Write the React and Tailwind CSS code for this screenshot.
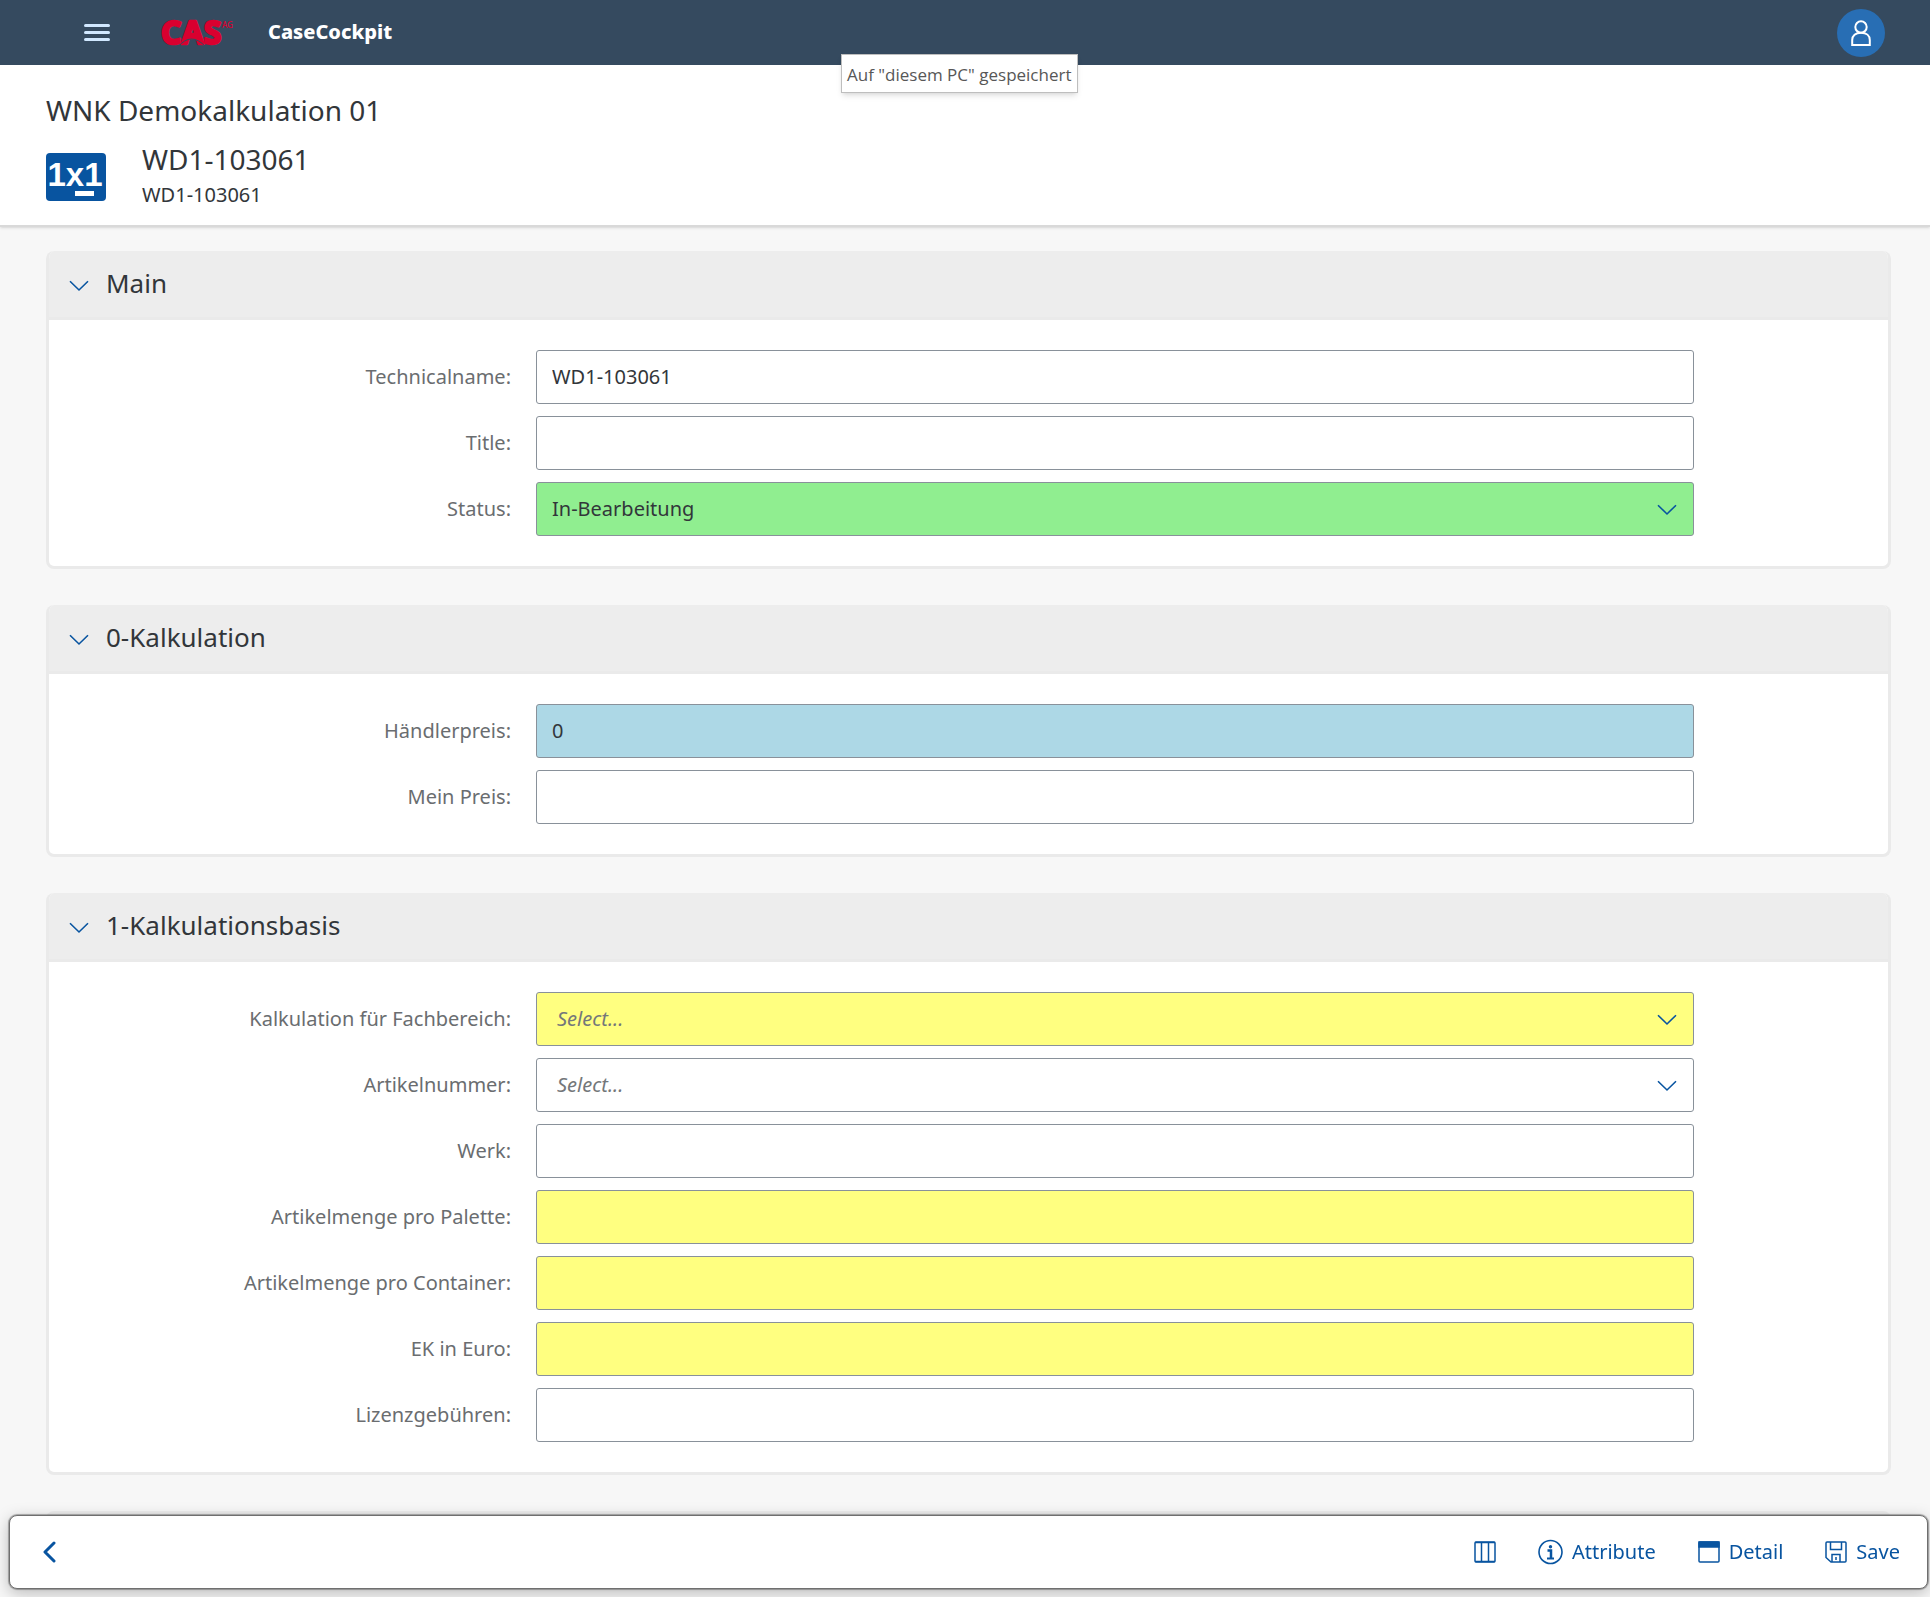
import { useId } from 'react'

function Chevron({ className }) {
  return (
    <svg width="20" height="12" viewBox="0 0 20 12" fill="none" stroke="#0854a0" strokeWidth="1.6" className={className} aria-hidden="true">
      <path d="M1 1.2 L10 10 L19 1.2" />
    </svg>
  )
}

function CasLogo() {
  return (
    <svg width="76" height="50" viewBox="0 0 76 50" fill="#d9002f" aria-label="CAS AG" role="img">
      <text x="0" y="36" fontFamily="Noto Sans, sans-serif" fontSize="32" fontWeight="700" stroke="#d9002f" strokeWidth="2.5" strokeLinejoin="round">CAS</text>
      <path d="M17 39 Q30 23 45 39" fill="none" stroke="#354a5f" strokeWidth="1" />
      <text x="61" y="20" fontFamily="Noto Sans, sans-serif" fontSize="8" fontWeight="500">AG</text>
    </svg>
  )
}

const boxClass = 'h-[54px] w-full rounded-[3px] border border-[#89919a] text-[20px] text-[#32363a] outline-none '

const tones = {
  plain: 'bg-white',
  green: 'bg-[#90ee90]',
  blue: 'bg-[#add8e6]',
  yellow: 'bg-[#ffff80]',
}

function Field({ label, value = '', tone = 'plain', select, placeholder }) {
  const id = useId()
  return (
    <div className="grid grid-cols-[487fr_1158fr_194fr] items-center">
      <label htmlFor={id} className="pr-[25px] text-right text-[20px] leading-[28px] text-[#6a6d70]">{label}:</label>
      {select ? (
        <div className="relative">
          <select
            id={id}
            defaultValue={value}
            className={boxClass + 'appearance-none pr-12 ' + tones[tone] + (placeholder ? ' pl-[20px] italic text-[#74777a]' : ' pl-[15px]')}
          >
            <option value={value}>{placeholder || value}</option>
          </select>
          <Chevron className="pointer-events-none absolute top-[22px] right-[17px]" />
        </div>
      ) : (
        <input id={id} type="text" defaultValue={value} className={boxClass + 'px-[15px] pb-[2px] ' + tones[tone]} />
      )}
    </div>
  )
}

function Panel({ title, children }) {
  return (
    <section className="overflow-hidden rounded-lg border-[3px] border-t-0 border-[#eaeaea] bg-white">
      <button type="button" className="-mx-[3px] flex h-[69px] w-[calc(100%+6px)] items-center gap-[17px] border-b-[3px] border-[#eaeaea] bg-[#ededed] pl-[23px] text-left">
        <Chevron className="mt-1" />
        <h2 className="pb-[2px] text-[26px] leading-[36px] text-[#32363a]">{title}</h2>
      </button>
      <div className="flex flex-col gap-3 py-[30px]">{children}</div>
    </section>
  )
}

function ToolButton({ label, children, ariaLabel }) {
  return (
    <button type="button" aria-label={ariaLabel} className="flex items-center gap-[9px] text-[20px] leading-[28px] text-[#0854a0]">
      {children}
      {label}
    </button>
  )
}

export default function App() {
  return (
    <div className="h-screen overflow-y-auto bg-[#f7f7f7] font-['Noto_Sans',sans-serif] text-[#32363a] [scrollbar-width:none]">
      <header className="relative flex h-[65px] items-center bg-[#354a5f] pr-[45px] pl-[84px]">
        <button type="button" aria-label="Menu" className="flex w-[26px] flex-col gap-1">
          <span className="h-[3px] rounded-full bg-[#d1e8ff]" />
          <span className="h-[3px] rounded-full bg-[#d1e8ff]" />
          <span className="h-[3px] rounded-full bg-[#d1e8ff]" />
        </button>
        <div className="ml-[51px]"><CasLogo /></div>
        <h1 className="ml-[31px] pb-[2px] text-[20px] leading-[28px] font-extrabold text-white">CaseCockpit</h1>
        <button type="button" aria-label="User" className="ml-auto flex size-12 items-center justify-center rounded-full bg-[#286eb4]">
          <svg width="20" height="26" viewBox="0 0 20 26" fill="none" stroke="#fff" strokeWidth="2" aria-hidden="true">
            <circle cx="10" cy="7" r="5.7" />
            <path d="M1.2 25 V20 C1.2 15.5 4.5 12.7 10 12.7 C15.5 12.7 18.8 15.5 18.8 20 V25 Z" />
          </svg>
        </button>
        <div role="tooltip" className="absolute top-[54px] left-[841px] flex h-[39px] items-center border border-[#bebebe] bg-white px-[5px] pt-[2px] font-['Open_Sans',sans-serif] text-[17px] whitespace-nowrap text-[#575757] shadow-md">
          Auf "diesem PC" gespeichert
        </div>
      </header>

      <div className="border-b-2 border-[#d9d9d9] bg-white px-[46px] pt-[25px] pb-[15px] shadow-sm">
        <p className="text-[28px] leading-[40px]">WNK Demokalkulation 01</p>
        <div className="mt-[9px] flex items-center gap-9">
          <svg width="60" height="48" viewBox="0 0 60 48" aria-label="1x1" role="img" className="mt-[4px]">
            <rect width="60" height="48" rx="4" fill="#0854a0" />
            <text x="29" y="33" textAnchor="middle" fontFamily="Liberation Sans, sans-serif" fontWeight="700" fontSize="33" fill="#fff">1x1</text>
            <rect x="29" y="38" width="19" height="5" fill="#fff" />
          </svg>
          <div>
            <p className="text-[28px] leading-[40px]">WD1-103061</p>
            <p className="text-[20px] leading-[31px]">WD1-103061</p>
          </div>
        </div>
      </div>

      <main className="flex flex-col gap-9 pt-6 pr-[39px] pb-9 pl-[46px]">
        <Panel title="Main">
          <Field label="Technicalname" value="WD1-103061" />
          <Field label="Title" />
          <Field label="Status" value="In-Bearbeitung" tone="green" select />
        </Panel>
        <Panel title="0-Kalkulation">
          <Field label="Händlerpreis" value="0" tone="blue" />
          <Field label="Mein Preis" />
        </Panel>
        <Panel title="1-Kalkulationsbasis">
          <Field label="Kalkulation für Fachbereich" placeholder="Select..." tone="yellow" select />
          <Field label="Artikelnummer" placeholder="Select..." select />
          <Field label="Werk" />
          <Field label="Artikelmenge pro Palette" tone="yellow" />
          <Field label="Artikelmenge pro Container" tone="yellow" />
          <Field label="EK in Euro" tone="yellow" />
          <Field label="Lizenzgebühren" />
        </Panel>
        <div className="h-[66px] rounded-lg bg-[#ededed]" />
      </main>

      <footer className="sticky bottom-2 mr-[2px] ml-[9px] flex h-[74px] items-center justify-between rounded-lg border border-[#6f6f6f] bg-white pr-[27px] pl-[33px] shadow-[0_0_1px_1px_rgba(0,0,0,0.3),0_4px_16px_rgba(0,0,0,0.25)]">
        <button type="button" aria-label="Back">
          <svg width="13" height="22" viewBox="0 0 13 22" fill="none" stroke="#0854a0" strokeWidth="3" strokeLinecap="round" strokeLinejoin="round" aria-hidden="true">
            <path d="M11 2 L2 11 L11 20" />
          </svg>
        </button>
        <div className="flex items-center gap-[42px]">
          <ToolButton ariaLabel="Columns">
            <svg width="22" height="22" viewBox="0 0 22 22" fill="none" stroke="#0854a0" strokeWidth="1.5" aria-hidden="true">
              <rect x="1" y="1" width="20" height="20" rx="1" />
              <path d="M7.5 1 V21 M14.5 1 V21 M1 1.5 H21 M1 20.5 H21" />
            </svg>
          </ToolButton>
          <ToolButton label="Attribute">
            <svg width="25" height="26" viewBox="0 0 25 26" fill="none" stroke="#0854a0" strokeWidth="1.6" aria-hidden="true">
              <circle cx="12.5" cy="13" r="11.5" />
              <circle cx="12.5" cy="7.7" r="1.7" fill="#0854a0" stroke="none" />
              <path d="M9.5 11.5 H13 V19" strokeWidth="2.5" />
              <path d="M9 19.5 H16" strokeWidth="2" />
            </svg>
          </ToolButton>
          <ToolButton label="Detail">
            <svg width="22" height="22" viewBox="0 0 22 22" fill="none" stroke="#0854a0" strokeWidth="1.5" aria-hidden="true">
              <rect x="1" y="1" width="20" height="20" rx="1" />
              <rect x="1" y="1" width="20" height="5" fill="#0854a0" />
            </svg>
          </ToolButton>
          <ToolButton label="Save">
            <svg width="22" height="22" viewBox="0 0 22 22" fill="none" stroke="#0854a0" strokeWidth="1.5" aria-hidden="true">
              <path d="M2 1 H20 Q21 1 21 2 V20 Q21 21 20 21 H6 L1 16.5 V2 Q1 1 2 1 Z" />
              <path d="M5.5 1 V8.5 H16.5 V1" />
              <path d="M7 21 V13.5 H15 V21 M11 16 V19" />
            </svg>
          </ToolButton>
        </div>
      </footer>
    </div>
  )
}
